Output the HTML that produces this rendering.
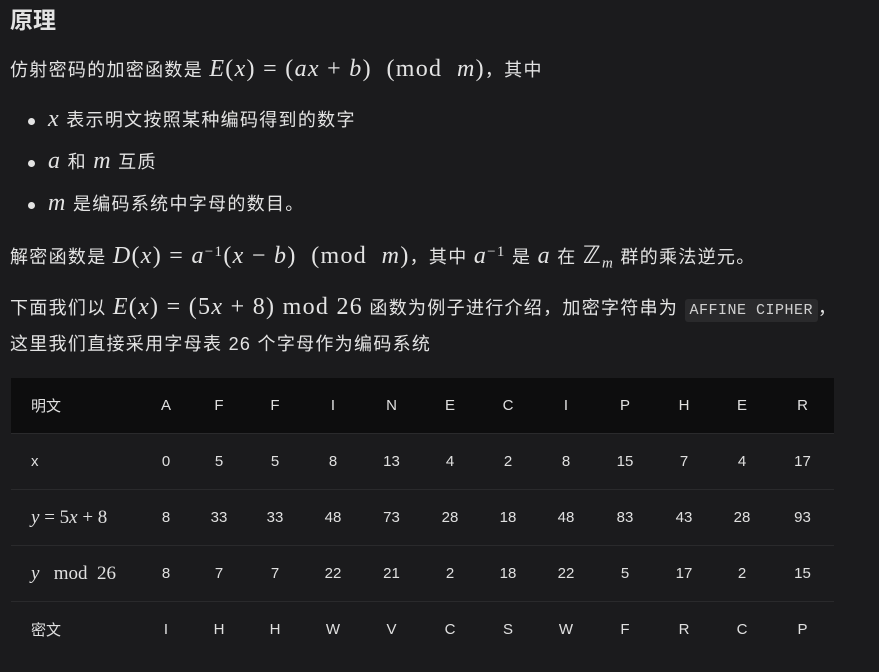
<!DOCTYPE html>
<html><head><meta charset="utf-8"><style>
body{margin:0;width:879px;height:672px;background:#1b1b1d;color:#e3e3e3;font-family:"Liberation Sans","Noto Sans CJK SC",sans-serif;overflow:hidden;position:relative}
.a{position:absolute;white-space:nowrap}
.m{font-family:"Liberation Serif","DejaVu Serif",serif;font-style:italic;font-size:24px}
.r{font-family:"Liberation Serif",serif;font-size:24px}
.t{font-size:18px;letter-spacing:1.3px}
.dot{position:absolute;width:7px;height:7px;border-radius:50%;background:#e3e3e3}
code{font-family:"Liberation Mono",monospace;font-size:15px;letter-spacing:0.5px;background:#2a2a2c;padding:3px 5px;border-radius:3px;color:#d0d0d0}
table{position:absolute;left:11px;top:378px;width:823px;border-collapse:collapse;font-size:15px;table-layout:fixed}
td{height:55px;border-top:1px solid #2a2a2c;padding:0;text-align:center;color:#e0e0e0;white-space:nowrap}
tr:first-child td{border-top:none;background:#0d0d0e}
td:first-child{text-align:left;padding-left:20px}
</style></head><body>
<div class="a" style="left:10px;top:1px;font-size:23px;font-weight:bold">原理</div>
<div class="a t" style="left:10px;top:56px">仿射密码的加密函数是 <span class="m">E</span><span class="r">(</span><span class="m">x</span><span class="r">) = (</span><span class="m">ax</span><span class="r"> + </span><span class="m">b</span><span class="r">) &nbsp;(mod &nbsp;</span><span class="m">m</span><span class="r">)</span>，其中</div>
<div class="dot" style="left:28px;top:118px"></div>
<div class="a t" style="left:48px;top:106px"><span class="m">x</span> 表示明文按照某种编码得到的数字</div>
<div class="dot" style="left:28px;top:160px"></div>
<div class="a t" style="left:48px;top:148px"><span class="m">a</span> 和 <span class="m">m</span> 互质</div>
<div class="dot" style="left:28px;top:202px"></div>
<div class="a t" style="left:48px;top:190px"><span class="m">m</span> 是编码系统中字母的数目。</div>
<div class="a t" style="left:10px;top:241px">解密函数是 <span class="m">D</span><span class="r">(</span><span class="m">x</span><span class="r">) = </span><span class="m">a</span><sup class="r" style="font-size:15px">−1</sup><span class="r">(</span><span class="m">x</span><span class="r"> − </span><span class="m">b</span><span class="r">) &nbsp;(mod &nbsp;</span><span class="m">m</span><span class="r">)</span>，其中 <span class="m">a</span><sup class="r" style="font-size:15px">−1</sup> 是 <span class="m">a</span> 在 <span class="r">ℤ</span><sub class="m" style="font-size:15px">m</sub> 群的乘法逆元。</div>
<div class="a t" style="left:10px;top:294px">下面我们以 <span class="m">E</span><span class="r">(</span><span class="m">x</span><span class="r">) = (5</span><span class="m">x</span><span class="r"> + 8) mod 26</span> 函数为例子进行介绍，加密字符串为 <code>AFFINE CIPHER</code>，</div>
<div class="a t" style="left:10px;top:330px">这里我们直接采用字母表 26 个字母作为编码系统</div>
<table>
<colgroup><col style="width:129px"><col style="width:52px"><col style="width:54px"><col style="width:58px"><col style="width:58px"><col style="width:59px"><col style="width:58px"><col style="width:58px"><col style="width:58px"><col style="width:60px"><col style="width:58px"><col style="width:58px"><col style="width:63px"></colgroup>
<tr><td>明文</td><td>A</td><td>F</td><td>F</td><td>I</td><td>N</td><td>E</td><td>C</td><td>I</td><td>P</td><td>H</td><td>E</td><td>R</td></tr>
<tr><td>x</td><td>0</td><td>5</td><td>5</td><td>8</td><td>13</td><td>4</td><td>2</td><td>8</td><td>15</td><td>7</td><td>4</td><td>17</td></tr>
<tr><td><span class="m" style="font-size:19px">y</span><span class="r" style="font-size:19px"> = 5</span><span class="m" style="font-size:19px">x</span><span class="r" style="font-size:19px"> + 8</span></td><td>8</td><td>33</td><td>33</td><td>48</td><td>73</td><td>28</td><td>18</td><td>48</td><td>83</td><td>43</td><td>28</td><td>93</td></tr>
<tr><td><span class="m" style="font-size:19px">y</span><span class="r" style="font-size:19px"> &nbsp; mod &nbsp;26</span></td><td>8</td><td>7</td><td>7</td><td>22</td><td>21</td><td>2</td><td>18</td><td>22</td><td>5</td><td>17</td><td>2</td><td>15</td></tr>
<tr><td>密文</td><td>I</td><td>H</td><td>H</td><td>W</td><td>V</td><td>C</td><td>S</td><td>W</td><td>F</td><td>R</td><td>C</td><td>P</td></tr>
</table>
</body></html>
